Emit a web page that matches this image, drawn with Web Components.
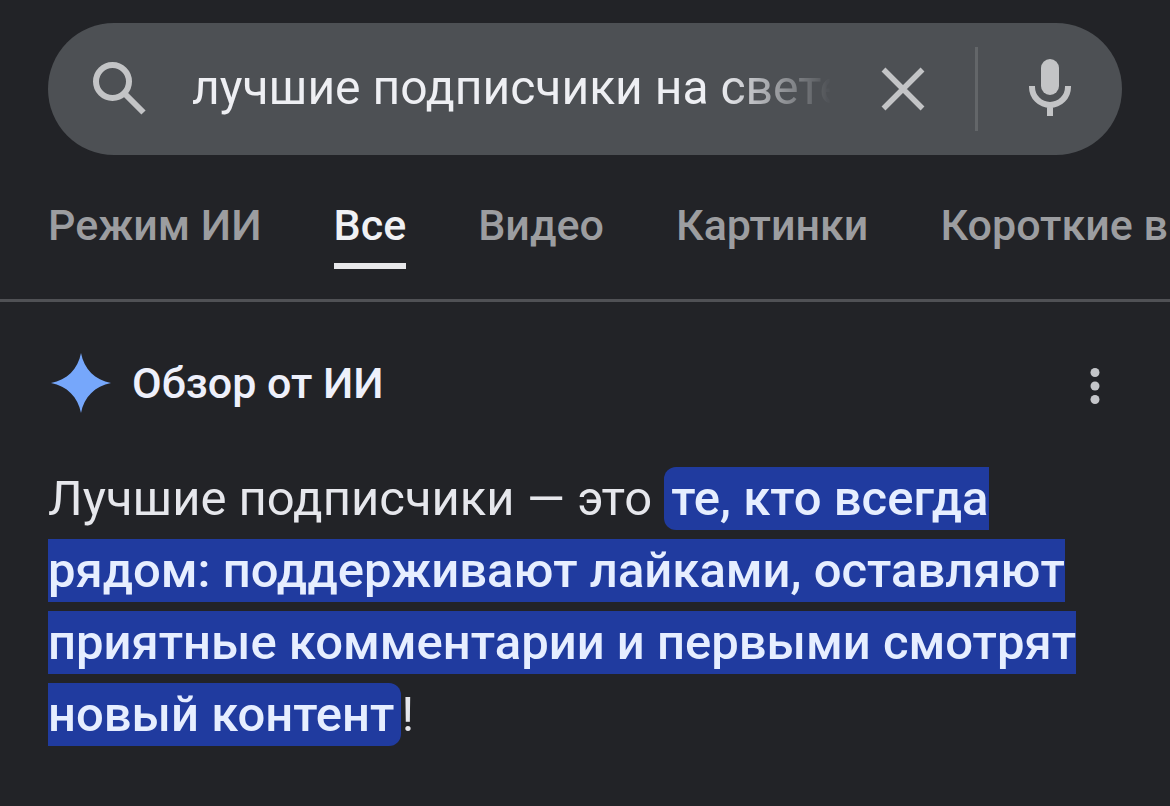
<!DOCTYPE html>
<html lang="ru">
<head>
<meta charset="utf-8">
<meta name="viewport" content="width=device-width, initial-scale=1">
<title>лучшие подписчики на свете</title>
<style>
  body {
    margin: 0;
    min-height: 100vh;
    overflow-x: hidden;
    background: #222327;
    color: #e6e7ec;
    font-family: Roboto, "Noto Sans", sans-serif;
  }
</style>
</head>
<body>
<results-page>
  <search-bar query="лучшие подписчики на свете"></search-bar>
  <search-tabs>
    <search-tab>Режим ИИ</search-tab>
    <search-tab active>Все</search-tab>
    <search-tab>Видео</search-tab>
    <search-tab>Картинки</search-tab>
    <search-tab>Короткие видео</search-tab>
  </search-tabs>
  <ai-overview heading="Обзор от ИИ">
    Лучшие подписчики — это <text-highlight>те, кто всегда<br>рядом: поддерживают лайками, оставляют<br>приятные комментарии и первыми смотрят<br>новый контент</text-highlight>!
  </ai-overview>
</results-page>

<script>
class ResultsPage extends HTMLElement {
  constructor() {
    super();
    this.attachShadow({ mode: 'open' });
    this.shadowRoot.innerHTML = `
      <style>
        :host {
          display: flex;
          flex-direction: column;
          padding-top: 23px;
        }
      </style>
      <slot></slot>
    `;
  }
}

class SearchBar extends HTMLElement {
  constructor() {
    super();
    this.attachShadow({ mode: 'open' });
  }

  connectedCallback() {
    this.render();
    this.setupEventListeners();
  }

  render() {
    this.shadowRoot.innerHTML = `
      <style>
        :host {
          display: block;
          margin: 0 48px;
        }

        form {
          display: flex;
          align-items: center;
          height: 132px;
          padding: 0 40px;
          box-sizing: border-box;
          border-radius: 66px;
          background: #4d5054;
        }

        svg {
          display: block;
          width: 64px;
          height: 64px;
        }

        input {
          flex: 1;
          min-width: 0;
          height: 68px;
          margin: 0 40px;
          padding: 0 0 4px;
          border: none;
          outline: none;
          background: none;
          color: #eeeff3;
          font: inherit;
          font-size: 48px;
          -webkit-mask-image: linear-gradient(to right, #000 calc(100% - 112px), transparent);
          mask-image: linear-gradient(to right, #000 calc(100% - 112px), transparent);
        }

        button {
          padding: 0;
          border: none;
          background: none;
          color: #c3c4c6;
          cursor: pointer;
        }

        .divider {
          width: 3px;
          height: 84px;
          margin: 0 40px;
          background: #636669;
        }
      </style>

      <form role="search">
        <button type="submit" aria-label="Поиск">
          <svg viewBox="0 0 64 64" fill="none" stroke="currentColor" stroke-width="6">
            <circle cx="24.500" cy="24.500" r="16.500"/>
            <path d="M36 36 55.500 55.500"/>
          </svg>
        </button>
        <input type="text" aria-label="Поисковый запрос">
        <button type="button" id="clear" aria-label="Очистить">
          <svg viewBox="0 0 64 64" fill="none" stroke="currentColor" stroke-width="5.500">
            <path d="M12.500 12.500 51.500 51.500M51.500 12.500 12.500 51.500"/>
          </svg>
        </button>
        <span class="divider"></span>
        <button type="button" aria-label="Голосовой поиск">
          <svg viewBox="0 0 64 64" fill="none" stroke="currentColor" stroke-width="6">
            <rect x="23" y="2" width="18" height="36" rx="9" fill="currentColor" stroke="none"/>
            <path d="M14 29v1a18 18 0 0 0 36 0v-1M32 47v12"/>
          </svg>
        </button>
      </form>
    `;
    this.shadowRoot.querySelector('input').value = this.getAttribute('query') || '';
  }

  setupEventListeners() {
    const input = this.shadowRoot.querySelector('input');

    this.shadowRoot.getElementById('clear').addEventListener('click', () => {
      input.value = '';
      input.focus();
    });

    this.shadowRoot.querySelector('form').addEventListener('submit', (e) => {
      e.preventDefault();
    });
  }
}

class SearchTabs extends HTMLElement {
  constructor() {
    super();
    this.attachShadow({ mode: 'open' });
    this.shadowRoot.innerHTML = `
      <style>
        :host {
          display: block;
          border-bottom: 3px solid #505155;
        }

        nav {
          display: flex;
          gap: 72px;
          padding: 38px 48px 30px;
          overflow: hidden;
        }
      </style>
      <nav><slot></slot></nav>
    `;
  }
}

class SearchTab extends HTMLElement {
  constructor() {
    super();
    this.attachShadow({ mode: 'open' });
    this.shadowRoot.innerHTML = `
      <style>
        :host {
          flex: none;
          display: block;
        }

        a {
          display: block;
          height: 70px;
          border-bottom: 6px solid transparent;
          color: #9c9da0;
          font-size: 43px;
          font-weight: 500;
          line-height: 64px;
          white-space: nowrap;
          text-decoration: none;
        }

        :host([active]) a {
          border-color: #e8e8ea;
          color: #f0f1f4;
        }
      </style>
      <a href="#"><slot></slot></a>
    `;
  }
}

class AiOverview extends HTMLElement {
  constructor() {
    super();
    this.attachShadow({ mode: 'open' });
  }

  connectedCallback() {
    this.shadowRoot.innerHTML = `
      <style>
        :host {
          display: block;
          padding: 48px;
        }

        header {
          display: flex;
          align-items: center;
          gap: 18px;
          margin-bottom: 47px;
        }

        .spark {
          width: 66px;
          height: 66px;
          fill: #76a7fb;
        }

        h2 {
          flex: 1;
          margin: 0;
          color: #eef0fb;
          font-size: 43px;
          font-weight: 500;
          line-height: 64px;
        }

        button {
          padding: 0;
          border: none;
          background: none;
          color: #c4c5c9;
          cursor: pointer;
        }

        button svg {
          display: block;
          width: 54px;
          height: 54px;
        }

        p {
          margin: 0;
          font-size: 49px;
          line-height: 72px;
        }
      </style>

      <header>
        <svg class="spark" viewBox="0 0 66 66">
          <path d="M33 3C36 19 47 30 63 33C47 36 36 47 33 63C30 47 19 36 3 33C19 30 30 19 33 3Z"/>
        </svg>
        <h2></h2>
        <button type="button" aria-label="Ещё">
          <svg viewBox="0 0 54 54" fill="currentColor">
            <circle cx="27" cy="16.500" r="4.500"/>
            <circle cx="27" cy="30" r="4.500"/>
            <circle cx="27" cy="43.500" r="4.500"/>
          </svg>
        </button>
      </header>
      <p><slot></slot></p>
    `;
    this.shadowRoot.querySelector('h2').textContent = this.getAttribute('heading');
  }
}

class TextHighlight extends HTMLElement {
  constructor() {
    super();
    this.attachShadow({ mode: 'open' });
    // no whitespace around the slot, it would show up inside the highlight
    this.shadowRoot.innerHTML = `<style>
        :host {
          display: inline;
          padding: 3px 7px;
          border-radius: 12px;
          background: #203b9f;
          color: #e6eeff;
          font-weight: 500;
        }
      </style><slot></slot>`;
  }
}

customElements.define('results-page', ResultsPage);
customElements.define('search-bar', SearchBar);
customElements.define('search-tabs', SearchTabs);
customElements.define('search-tab', SearchTab);
customElements.define('ai-overview', AiOverview);
customElements.define('text-highlight', TextHighlight);
</script>
</body>
</html>
